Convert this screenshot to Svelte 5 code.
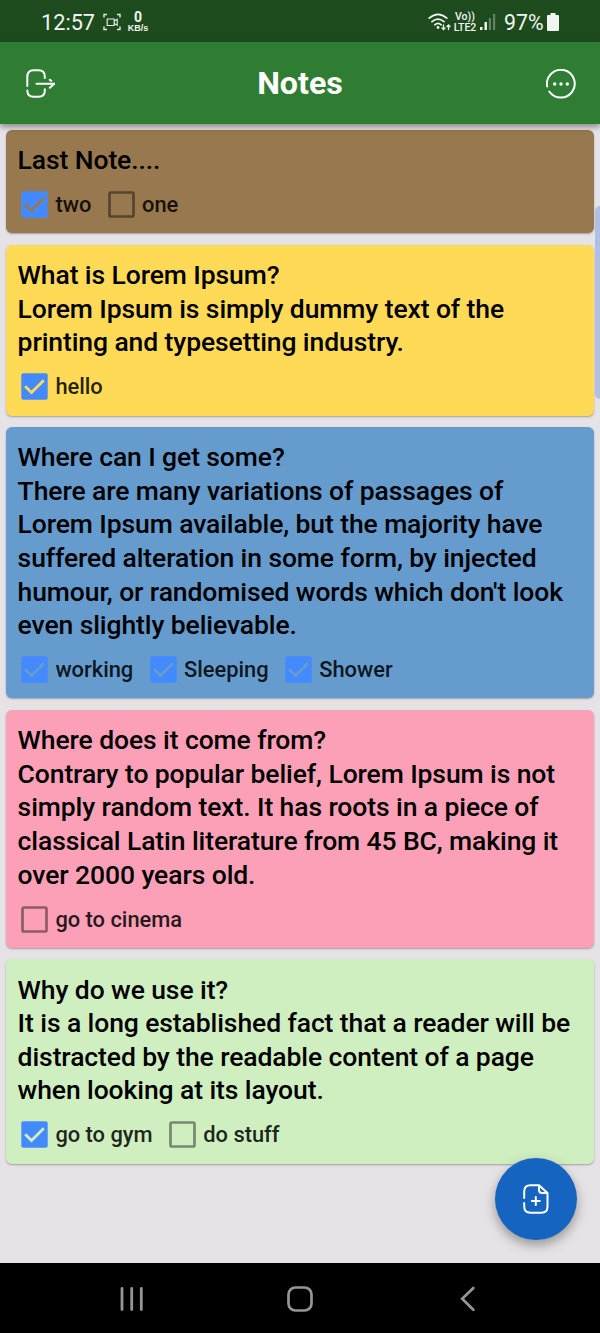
<script>
  const notes = [
    { color: '#98784e', lines: ['Last Note....'], items: [['two', true], ['one', false]] },
    {
      color: '#ffda56',
      lines: ['What is Lorem Ipsum?', 'Lorem Ipsum is simply dummy text of the', 'printing and typesetting industry.'],
      items: [['hello', true]]
    },
    {
      color: '#659bcd',
      lines: [
        'Where can I get some?',
        'There are many variations of passages of',
        'Lorem Ipsum available, but the majority have',
        'suffered alteration in some form, by injected',
        "humour, or randomised words which don't look",
        'even slightly believable.'
      ],
      items: [['working', true], ['Sleeping', true], ['Shower', true]]
    },
    {
      color: '#fca0b7',
      lines: [
        'Where does it come from?',
        'Contrary to popular belief, Lorem Ipsum is not',
        'simply random text. It has roots in a piece of',
        'classical Latin literature from 45 BC, making it',
        'over 2000 years old.'
      ],
      items: [['go to cinema', false]]
    },
    {
      color: '#d0efc0',
      lines: [
        'Why do we use it?',
        'It is a long established fact that a reader will be',
        'distracted by the readable content of a page',
        'when looking at its layout.'
      ],
      items: [['go to gym', true], ['do stuff', false]]
    }
  ];
</script>

<div class="phone">
  <div class="status">
    <span class="clock">12:57</span>
    <svg class="rec" width="18" height="18" viewBox="0 0 18 18" fill="none" stroke="#e3ece2" stroke-width="1.4">
      <path d="M1 4.500V1.500H4M14 1.500h3v3M17 13.500v3h-3M4 16.500H1v-3" />
      <path d="M4.200 6h7v6.500h-7zM11.200 8l3-1.700v6l-3-1.700" stroke-width="1.2" />
    </svg>
    <span class="speed"><b>0</b><i>KB/s</i></span>
    <span class="spacer"></span>
    <svg class="wifi" width="24" height="19" viewBox="0 0 24 19" fill="none" stroke="#f1f5f0" stroke-width="1.7" stroke-linecap="round">
      <path d="M1.200 5.200Q10 -2.500 18.800 5.200M4 8.700Q10 3.500 16 8.700M6.800 11.800Q10 9 13.200 11.800" />
      <circle cx="10" cy="14.500" r="1.400" fill="#f1f5f0" stroke="none" />
      <path d="M15.500 12v4.500m-1.500-1.500 1.500 1.500 1.500-1.500M20.500 16.500V12m-1.500 1.500 1.500-1.500 1.500 1.500" stroke-width="1.300" />
    </svg>
    <span class="lte"><span>Vo))</span><span>LTE2</span></span>
    <svg class="signal" width="16" height="18" viewBox="0 0 16 18">
      <path d="M0 14h2.500v3H0zM4.500 9h2.500v8H4.500z" fill="#f1f5f0" />
      <path d="M8.800 5H11V17H8.800zM13 1h2.200v16H13z" fill="#638263" />
    </svg>
    <span class="percent">97%</span>
    <svg class="battery" width="12" height="18" viewBox="0 0 12 18">
      <path d="M3.500 0h5v2H11a1 1 0 0 1 1 1v14a1 1 0 0 1-1 1H1a1 1 0 0 1-1-1V3a1 1 0 0 1 1-1h2.500z" fill="#f1f5f0" />
    </svg>
  </div>

  <header>
    <svg width="30" height="30" viewBox="0 0 30 30" fill="none" stroke="#fff" stroke-width="2" stroke-linecap="round" stroke-linejoin="round">
      <path d="M2.300 17V8Q2.300 1.300 8.500 1.300h5Q19.800 1.300 19.800 7.500v1.500M2.300 21.500Q2.500 27.800 8.500 27.800h5q6.300 0 6.300-6v-1.500M11.500 14.800H29.300M24.800 10.800l1.500 1M29.300 14.800l-4.500 4" />
    </svg>
    <h1>Notes</h1>
    <svg width="30" height="30" viewBox="0 0 30 30" fill="none" stroke="#fff" stroke-width="2" stroke-linecap="round">
      <path d="M1.200 17.500A13.900 13.900 0 1 1 3.300 22.500" />
      <g fill="#fff" stroke="none"><circle cx="8.700" cy="15" r="1.700" /><circle cx="15" cy="15" r="1.700" /><circle cx="21.300" cy="15" r="1.700" /></g>
    </svg>
  </header>

  <main>
    {#each notes as note}
      <article style="background: {note.color}">
        <p>{#each note.lines as line}<span>{line}</span>{/each}</p>
        <div class="checks">
          {#each note.items as [label, done]}
            <div class="check">
              <svg width="27" height="27" viewBox="0 0 27 27" fill="none">
                {#if done}
                  <rect x="0.300" y="0.300" width="26.400" height="26.400" rx="2" fill="#448aff" />
                  <path d="M4.200 13.300 10.500 19.500 22.800 7.200" stroke={note.color} stroke-width="2.700" />
                {:else}
                  <rect x="1.500" y="1.500" width="24" height="24" rx="1.500" stroke="#000" stroke-opacity=".43" stroke-width="2.700" />
                {/if}
              </svg>
              <span>{label}</span>
            </div>
          {/each}
        </div>
      </article>
    {/each}
    <div class="scrollbar"></div>
    <button class="fab" aria-label="Add note">
      <svg width="26" height="30" viewBox="0 0 26 30" fill="none" stroke="#fff" stroke-width="2" stroke-linecap="round" stroke-linejoin="round">
        <path d="M1.200 14V7.500Q1.200 1.200 7.500 1.200H16L24.500 9V22.500Q24.500 28.700 18.500 28.700H7.500Q1.200 28.700 1.200 22.500V19M16 1.200V6Q16 9 19 9H24.500M12.800 13v8M8.800 17h8" />
      </svg>
    </button>
  </main>

  <nav>
    <svg width="24" height="26" viewBox="0 0 24 26" stroke="#989496" stroke-width="2.800" stroke-linecap="round"><path d="M2 2.500v21M11.700 2.500v21M21.300 2.500v21" /></svg>
    <svg class="home" width="26" height="26" viewBox="0 0 26 26" fill="none" stroke="#989496" stroke-width="2.700"><rect x="1.500" y="1.500" width="23" height="23" rx="7" /></svg>
    <svg width="16" height="26" viewBox="0 0 16 26" fill="none" stroke="#989496" stroke-width="2.700" stroke-linecap="round"><path d="M13.300 2 2.200 12.800 13.300 23.700" /></svg>
  </nav>
</div>

<style>
  :global(body) { margin: 0; }
  .phone { width: 600px; height: 1333px; display: flex; flex-direction: column; overflow: hidden; background: #e5e3e6; font-family: Roboto, sans-serif; color: #000; }
  .status { height: 42px; flex: none; box-sizing: border-box; padding: 2px 41px 0 41px; display: flex; align-items: center; background: #1d4b1e; color: #f1f5f0; }
  .clock { width: 54px; font-size: 21.700px; white-space: nowrap; }
  .rec { margin-left: 8px; }
  .speed { width: 22px; margin-left: 6px; display: flex; flex-direction: column; align-items: center; }
  .speed b { font: bold 14px/13px Roboto, sans-serif; }
  .speed i { font: bold 9px/9px "Liberation Sans", sans-serif; }
  .spacer { flex: 1; }
  .lte { width: 24px; margin-left: 1px; display: flex; flex-direction: column; align-items: center; font-size: 10.500px; line-height: 11px; font-weight: 500; }
  .signal { margin-left: 3px; }
  .percent { width: 39px; margin-left: 8px; font-size: 21.300px; white-space: nowrap; }
  .battery { margin-left: 4px; }
  header { position: relative; z-index: 1; height: 82px; flex: none; box-sizing: border-box; padding: 1px 24px 0 25px; display: flex; align-items: center; justify-content: space-between; background: #2f7d32; box-shadow: 0 3px 6px rgba(0, 0, 0, .4); }
  h1 { margin: -2px 1px 0 0; font-size: 32.200px; line-height: 40px; font-weight: 700; color: #fff; }
  main { position: relative; height: 1139px; flex: none; box-sizing: border-box; padding: 5.800px 6px 6px; display: flex; flex-direction: column; gap: 11.400px; }
  article { flex: none; box-sizing: border-box; padding: 13.300px 12px 15.200px; border-radius: 6px; box-shadow: 0 1px 2px rgba(0, 0, 0, .3); }
  p { margin: 0 0 0 -.4px; font-size: 26.500px; line-height: 33.600px; font-weight: 500; letter-spacing: -.1px; white-space: nowrap; }
  p span { display: block; }
  .checks { display: flex; height: 27px; margin-top: 14.500px; padding-left: 3.300px; gap: 16.600px; }
  .check { display: flex; align-items: center; gap: 7.100px; font-size: 21.900px; line-height: 27px; font-weight: 500; letter-spacing: -.02px; color: rgba(0, 0, 0, .87); white-space: nowrap; }
  .scrollbar { position: absolute; top: 82px; right: 0; width: 5px; height: 193px; border-radius: 5px 0 0 5px; background: #b1c0e2; }
  .fab { position: absolute; left: 495px; top: 1034px; width: 82px; height: 82px; padding: 0; border: 0; border-radius: 50%; display: flex; align-items: center; justify-content: center; background: #1564c0; box-shadow: 0 5px 12px rgba(0, 0, 0, .35); }
  nav { flex: 1; display: flex; align-items: center; justify-content: space-between; padding: 2px 124px 0 120px; background: #000; }
  .home { margin-right: 4px; }
</style>
